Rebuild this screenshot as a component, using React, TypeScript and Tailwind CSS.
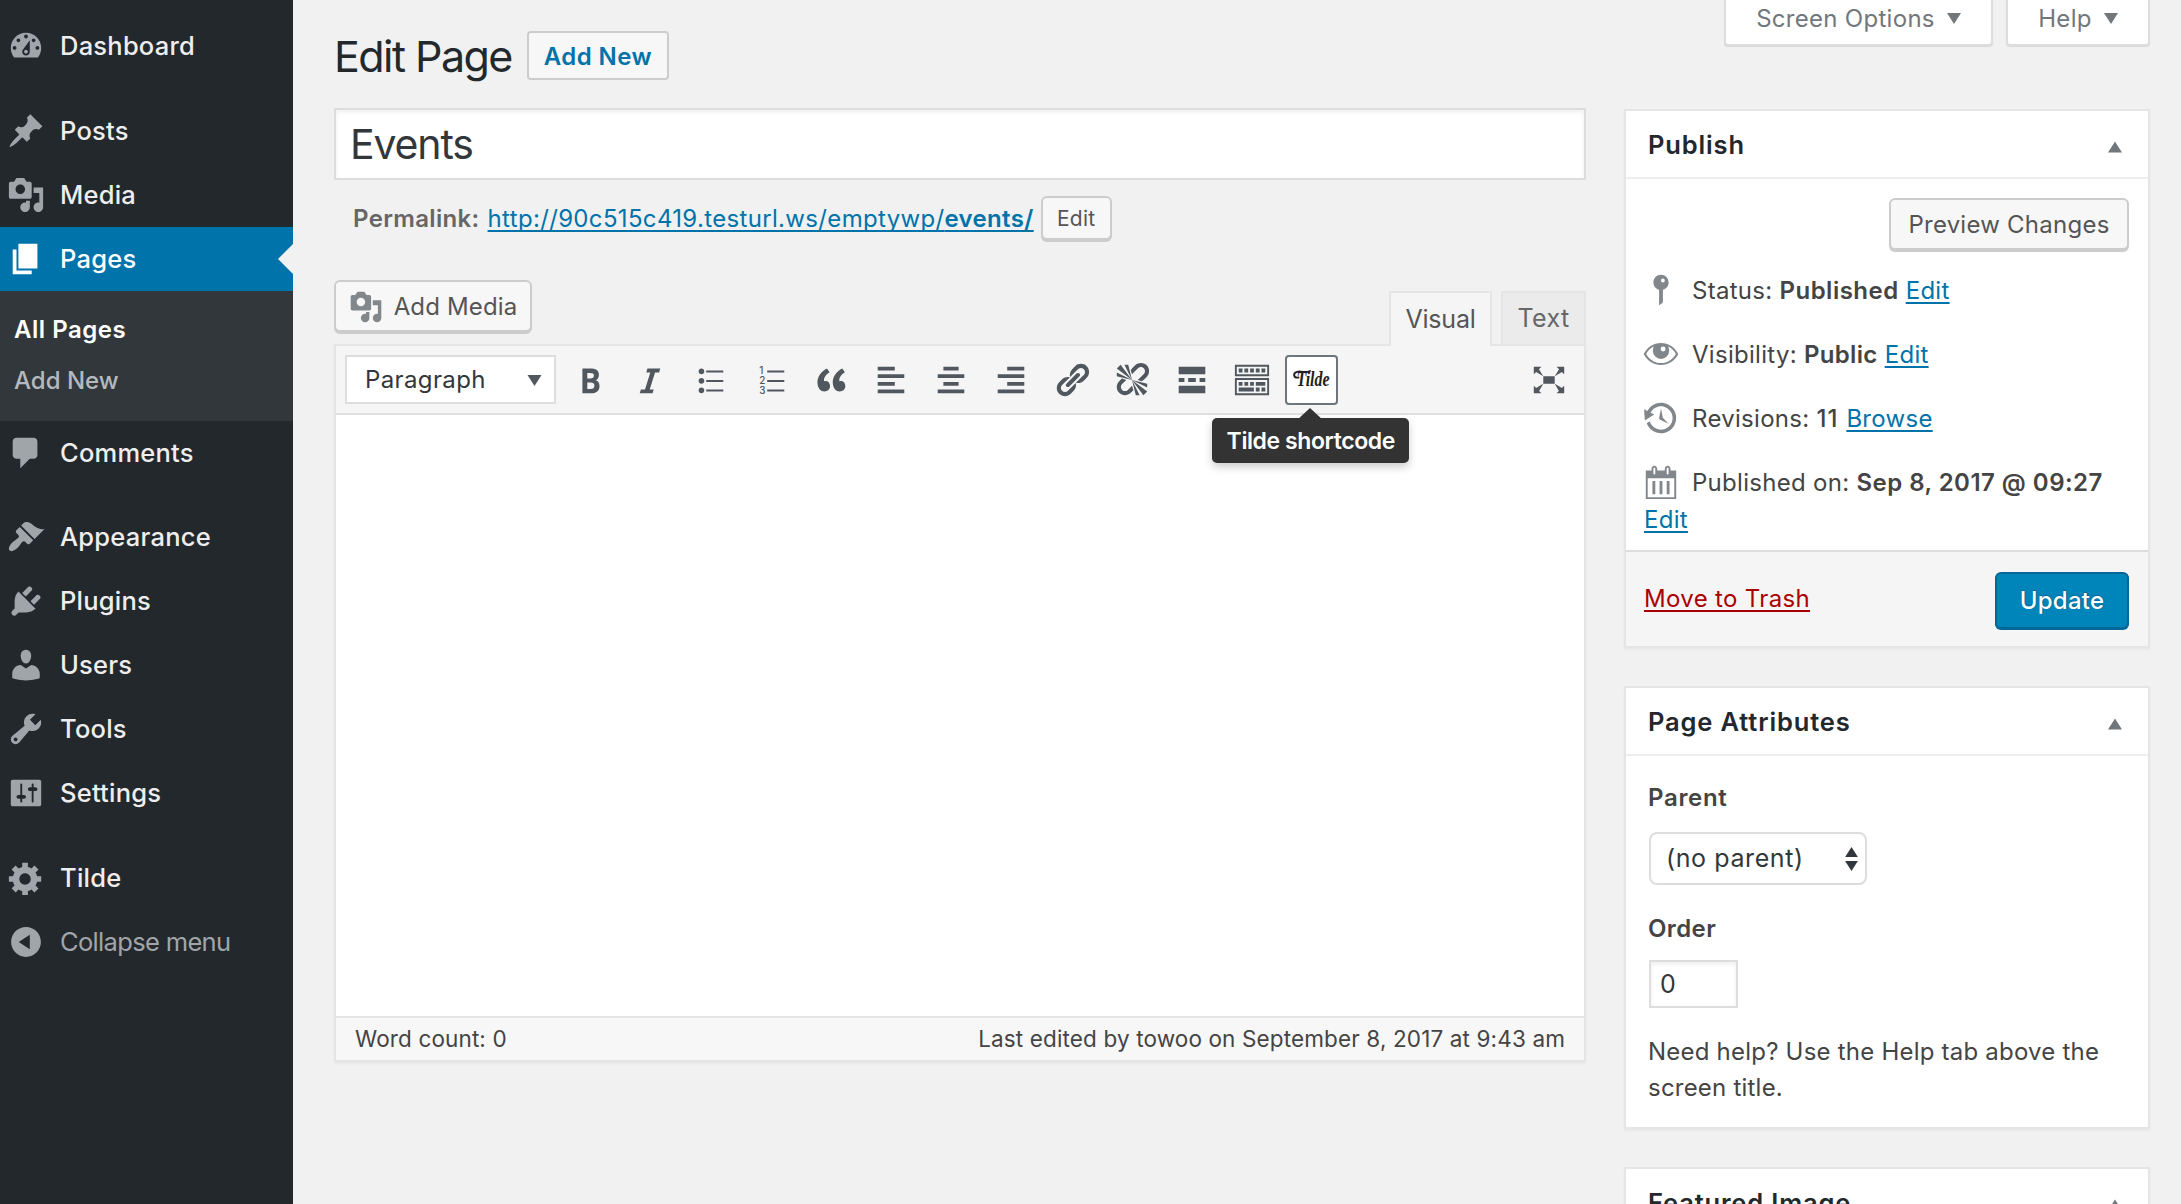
import { clsx } from 'clsx'
import type { ReactNode } from 'react'

const icons = {
  dashboard:
    'M3.76 16h12.48c1.1-1.37 1.76-3.11 1.76-5 0-4.42-3.58-8-8-8s-8 3.58-8 8c0 1.89.66 3.63 1.76 5zM10 4c.55 0 1 .45 1 1s-.45 1-1 1-1-.45-1-1 .45-1 1-1zM6 6c.55 0 1 .45 1 1s-.45 1-1 1-1-.45-1-1 .45-1 1-1zm8 0c.55 0 1 .45 1 1s-.45 1-1 1-1-.45-1-1 .45-1 1-1zm-5.37 5.55L12 7v6c0 1.1-.9 2-2 2s-2-.9-2-2c0-.57.24-1.08.63-1.45zM4 10c.55 0 1 .45 1 1s-.45 1-1 1-1-.45-1-1 .45-1 1-1zm12 0c.55 0 1 .45 1 1s-.45 1-1 1-1-.45-1-1 .45-1 1-1zm-5 3c0-.55-.45-1-1-1s-1 .45-1 1 .45 1 1 1 1-.45 1-1z',
  post: 'M10.44 3.02l1.82-1.82 6.36 6.35-1.83 1.82c-1.05-.68-2.48-.57-3.41.36l-.75.75c-.92.93-1.04 2.35-.35 3.41l-1.83 1.82-2.41-2.41-2.8 2.79c-.42.42-3.38 2.71-3.8 2.29s1.86-3.39 2.28-3.81l2.79-2.79L4.1 9.36l1.83-1.82c1.05.69 2.48.57 3.4-.36l.75-.75c.93-.92 1.05-2.35.36-3.41z',
  media:
    'M13 11V4c0-.55-.45-1-1-1h-1.67L9 1H5L3.67 3H2c-.55 0-1 .45-1 1v7c0 .55.45 1 1 1h10c.55 0 1-.45 1-1zM7 4.5c1.38 0 2.5 1.12 2.5 2.5S8.38 9.5 7 9.5 4.5 8.38 4.5 7 5.62 4.5 7 4.5zM14 6h5v10.5c0 1.38-1.12 2.5-2.5 2.5S14 17.88 14 16.5s1.12-2.5 2.5-2.5c.17 0 .34.02.5.05V9h-3V6zm-4 8.05V13h2v3.5c0 1.38-1.12 2.5-2.5 2.5S7 17.88 7 16.5 8.12 14 9.5 14c.17 0 .34.02.5.05z',
  page: 'M6 15V2h10v13H6zm-1 1h8v2H3V5h2v11z',
  comments:
    'M5 2h9c1.1 0 2 .9 2 2v7c0 1.1-.9 2-2 2h-2l-5 5v-5H5c-1.1 0-2-.9-2-2V4c0-1.1.9-2 2-2z',
  appearance:
    'M14.48 11.06L7.41 3.99l1.5-1.5c.5-.56 2.3-.47 3.51.32 1.21.8 1.43 1.28 2.91 2.1 1.18.64 2.45 1.26 4.45.85zm-.71.71L6.7 4.7 4.93 6.47c-.39.39-.39 1.02 0 1.41l1.06 1.06c.39.39.39 1.03 0 1.42-.6.6-1.43 1.11-2.21 1.69-.35.26-.7.53-1.01.84C1.43 14.23.4 16.08 1.4 17.07c.99 1 2.84-.03 4.18-1.36.31-.31.58-.66.85-1.02.57-.78 1.08-1.61 1.69-2.21.39-.39 1.02-.39 1.41 0l1.06 1.06c.39.39 1.02.39 1.41 0z',
  plugins:
    'M13.11 4.36L9.87 7.6 8 5.73l3.24-3.24c.35-.34 1.05-.2 1.56.32.52.51.66 1.21.31 1.55zm-8 1.77l.91-1.12 9.01 9.01-1.19.84c-.71.71-2.63 1.16-3.82 1.16H6.14L4.9 17.26c-.59.59-1.54.59-2.12 0-.59-.58-.59-1.53 0-2.12l1.24-1.24v-3.88c0-1.13.4-3.19 1.09-3.89zm7.26 3.97l3.24-3.24c.34-.35 1.04-.21 1.55.31.52.51.66 1.21.31 1.55l-3.24 3.25z',
  users:
    'M10 9.25c-2.27 0-2.73-3.44-2.73-3.44C7 4.02 7.82 2 9.97 2c2.16 0 2.98 2.02 2.71 3.81 0 0-.41 3.44-2.68 3.44zm0 2.57L12.72 10c2.39 0 4.52 2.33 4.52 4.53v2.49s-3.65 1.13-7.24 1.13c-3.65 0-7.24-1.13-7.24-1.13v-2.49c0-2.25 1.94-4.48 4.47-4.48z',
  tools:
    'M16.68 9.77c-1.34 1.34-3.3 1.67-4.95.99l-5.41 6.52c-.99.99-2.59.99-3.58 0s-.99-2.59 0-3.57l6.52-5.42c-.68-1.65-.35-3.61.99-4.95 1.28-1.28 3.12-1.62 4.72-1.06l-2.89 2.89 2.82 2.82 2.86-2.87c.53 1.58.18 3.39-1.08 4.65zM3.81 16.21c.4.39 1.04.39 1.43 0 .4-.4.4-1.04 0-1.43-.39-.4-1.03-.4-1.43 0-.39.39-.39 1.03 0 1.43z',
  settings:
    'M18 16V4c0-.55-.45-1-1-1H3c-.55 0-1 .45-1 1v12c0 .55.45 1 1 1h14c.55 0 1-.45 1-1zM8 11h1c.55 0 1 .45 1 1s-.45 1-1 1H8v1.5c0 .28-.22.5-.5.5s-.5-.22-.5-.5V13H6c-.55 0-1-.45-1-1s.45-1 1-1h1V5.5c0-.28.22-.5.5-.5s.5.22.5.5V11zm5-2h-1c-.55 0-1-.45-1-1s.45-1 1-1h1V5.5c0-.28.22-.5.5-.5s.5.22.5.5V7h1c.55 0 1 .45 1 1s-.45 1-1 1h-1v5.5c0 .28-.22.5-.5.5s-.5-.22-.5-.5V9z',
  generic:
    'M18 12h-2.18c-.17.7-.44 1.35-.81 1.93l1.54 1.54-2.1 2.1-1.54-1.54c-.58.36-1.23.63-1.91.79V19H8v-2.18c-.68-.16-1.33-.43-1.91-.79l-1.54 1.54-2.12-2.12 1.54-1.54c-.36-.58-.63-1.23-.79-1.91H1V9.03h2.17c.16-.7.44-1.35.8-1.94L2.43 5.55l2.1-2.1 1.54 1.54c.58-.37 1.24-.64 1.93-.81V2h3v2.18c.68.16 1.33.43 1.91.79l1.54-1.54 2.12 2.12-1.54 1.54c.36.59.64 1.24.8 1.94H18V12zm-8.5 1.5c1.66 0 3-1.34 3-3s-1.34-3-3-3-3 1.34-3 3 1.34 3 3 3z',
  collapse:
    'M10 2.16c4.33 0 7.84 3.51 7.84 7.84s-3.51 7.84-7.84 7.84S2.16 14.33 2.16 10 5.71 2.16 10 2.16zm2 11.72V6.12L6.18 9.97z',
  pin: 'M14 6c0 1.86-1.28 3.41-3 3.86V16c0 1-2 2-2 2V9.86c-1.72-.45-3-2-3-3.86 0-2.21 1.79-4 4-4s4 1.79 4 4zM10 5a1 1 0 1 0 2 0 1 1 0 1 0-2 0z',
  eye: 'M.9 10C2.7 6.5 6 4.2 10 4.2s7.3 2.3 9.1 5.8c-1.8 3.5-5.1 5.8-9.1 5.8S2.7 13.5.9 10zM2.2 10c1.6 2.9 4.4 4.8 7.8 4.8s6.2-1.9 7.8-4.8c-.9-1.7-2.3-3.1-4-3.9.3.7.5 1.4.5 2.2a4.3 4.3 0 1 1-8.6 0c0-.8.2-1.5.5-2.2-1.7.8-3.1 2.2-4 3.9zM9.8 7.4a1.3 1.3 0 1 0 2.6 0 1.3 1.3 0 1 0-2.6 0z',
  backup:
    'M13.65 2.88c3.93 2.01 5.48 6.84 3.47 10.77s-6.83 5.48-10.77 3.47c-1.87-.96-3.2-2.56-3.86-4.4l1.64-1.03c.45 1.57 1.52 2.95 3.08 3.76 3.01 1.54 6.69.35 8.23-2.66 1.55-3.01.36-6.69-2.65-8.24C9.78 3.01 6.1 4.2 4.56 7.21l1.88.97-4.95 3.08-.39-5.82 1.78.91C4.9 2.4 9.75.89 13.65 2.88zm-4.36 7.83C9.11 10.53 9 10.28 9 10c0-.07.03-.12.04-.19h-.01L10 5l.97 4.81L14 13l-4.5-2.12.02-.02c-.08-.04-.16-.09-.23-.15z',
  calendar:
    'M15 4h3v15H2V4h3V3c0-.41.15-.76.44-1.06.29-.29.65-.44 1.06-.44s.77.15 1.06.44c.29.3.44.65.44 1.06v1h4V3c0-.41.15-.76.44-1.06.29-.29.65-.44 1.06-.44s.77.15 1.06.44c.29.3.44.65.44 1.06v1zM6 3v2.5c0 .14.05.26.15.36.09.09.21.14.35.14s.26-.05.35-.14c.1-.1.15-.22.15-.36V3c0-.14-.05-.26-.15-.35-.09-.1-.21-.15-.35-.15s-.26.05-.35.15c-.1.09-.15.21-.15.35zm7 0v2.5c0 .14.05.26.14.36.1.09.22.14.36.14s.26-.05.36-.14c.09-.1.14-.22.14-.36V3c0-.14-.05-.26-.14-.35-.1-.1-.22-.15-.36-.15s-.26.05-.36.15c-.09.09-.14.21-.14.35zm4 15V8H3v10h14zM7 9.5v7H5.5v-7H7zm3.75 0v7h-1.5v-7h1.5zm3.75 0v7H13v-7h1.5z',
  bold: 'M6 4v13h4.54c1.37 0 2.46-.33 3.26-1 .8-.66 1.2-1.58 1.2-2.77 0-.84-.17-1.51-.51-2.01s-.9-.85-1.67-1.03v-.09c.57-.1 1.02-.4 1.36-.9s.51-1.13.51-1.91c0-1.14-.39-1.98-1.17-2.5C12.75 4.26 11.5 4 9.78 4H6zm2.57 5.15V6.26h1.36c.73 0 1.27.11 1.61.32.34.22.51.58.51 1.07 0 .54-.16.92-.47 1.15s-.82.35-1.51.35h-1.5zm0 2.19h1.6c1.44 0 2.16.53 2.16 1.61 0 .6-.17 1.05-.51 1.34s-.86.43-1.57.43H8.57v-3.38z',
  italic: 'M14.78 6h-2.13l-2.8 9h2.12l-.62 2H4.6l.62-2h2.14l2.8-9H8.03l.62-2h6.75z',
  ul: 'M5.5 7C4.67 7 4 6.33 4 5.5 4 4.68 4.67 4 5.5 4 6.32 4 7 4.68 7 5.5 7 6.33 6.32 7 5.5 7zM8 5h9v1H8V5zm-2.5 7c-.83 0-1.5-.67-1.5-1.5C4 9.68 4.67 9 5.5 9c.82 0 1.5.68 1.5 1.5 0 .83-.68 1.5-1.5 1.5zM8 10h9v1H8v-1zm-2.5 7c-.83 0-1.5-.67-1.5-1.5 0-.82.67-1.5 1.5-1.5.82 0 1.5.68 1.5 1.5 0 .83-.68 1.5-1.5 1.5zM8 15h9v1H8v-1z',
  ol: 'M8 5h9v1H8V5zM8 10h9v1H8v-1zM8 15h9v1H8v-1z',
  quote:
    'M9.49 13.22c0-.74-.2-1.38-.61-1.9-.62-.78-1.83-.88-2.53-.72-.29-1.65 1.11-3.75 2.92-4.65L7.88 4c-2.73 1.3-5.42 4.28-4.96 8.05C3.21 14.43 4.59 16 6.54 16c.85 0 1.56-.25 2.12-.75s.83-1.18.83-2.03zm8.05 0c0-.74-.2-1.38-.61-1.9-.63-.78-1.83-.88-2.53-.72-.29-1.65 1.11-3.75 2.92-4.65L15.93 4c-2.73 1.3-5.41 4.28-4.95 8.05.29 2.38 1.66 3.95 3.61 3.95.85 0 1.56-.25 2.12-.75s.83-1.18.83-2.03z',
  alignLeft: 'M12 5V3H3v2h9zm5 4V7H3v2h14zm-5 4v-2H3v2h9zm5 4v-2H3v2h14z',
  alignCenter: 'M14 5V3H6v2h8zm3 4V7H3v2h14zm-3 4v-2H6v2h8zm3 4v-2H3v2h14z',
  alignRight: 'M17 5V3H8v2h9zm0 4V7H3v2h14zm0 4v-2H8v2h9zm0 4v-2H3v2h14z',
  link: 'M17.74 2.76c1.68 1.69 1.68 4.41 0 6.1l-1.53 1.52c-1.12 1.12-2.7 1.47-4.14 1.09l2.62-2.61.76-.77.76-.76c.84-.84.84-2.2 0-3.04-.84-.85-2.2-.85-3.04 0l-.77.76-3.38 3.38c-.37-1.44-.02-3.02 1.1-4.14l1.52-1.53c1.69-1.68 4.42-1.68 6.1 0zM8.59 13.43l5.34-5.34c.42-.42.42-1.1 0-1.52-.44-.43-1.13-.39-1.53 0l-5.33 5.34c-.42.42-.42 1.1 0 1.52.44.43 1.13.39 1.52 0zm-.76 2.29l4.14-4.15c.38 1.44.03 3.02-1.09 4.14l-1.52 1.53c-1.69 1.68-4.41 1.68-6.1 0-1.68-1.68-1.68-4.42 0-6.1l1.53-1.52c1.12-1.12 2.7-1.47 4.14-1.1l-4.14 4.15c-.85.84-.85 2.2 0 3.05.84.84 2.2.84 3.04 0z',
  unlink:
    'M17.74 2.26c1.68 1.69 1.68 4.41 0 6.1l-1.53 1.52c-.32.33-.69.58-1.08.77L13 10l1.69-1.64.76-.77.76-.76c.84-.84.84-2.2 0-3.04-.84-.85-2.2-.85-3.04 0l-.77.76-.76.76L10 7l-.65-2.14c.19-.38.44-.75.77-1.07l1.52-1.53c1.69-1.68 4.42-1.68 6.1 0zM2 4l8 6-6-8zm4-2l4 8-2-8H6zM2 6l8 4-8-2V6zm7.36 7.69L10 13l.74 2.35-1.38 1.39c-1.69 1.68-4.41 1.68-6.1 0-1.68-1.68-1.68-4.42 0-6.1l1.39-1.38L7 10l-.69.64-1.52 1.53c-.85.84-.85 2.2 0 3.04.84.85 2.2.85 3.04 0zM18 16l-8-6 6 8zm-4 2l-4-8 2 8h2zm4-4l-8-4 8 2v2z',
  more: 'M17 7V3H3v4h14zM6 11V9H3v2h3zm6 0V9H8v2h4zm5 0V9h-3v2h3zm0 6v-4H3v4h14z',
  kitchensink:
    'M19 2v6H1V2h18zm-1 5V3H2v4h16zM5 4v2H3V4h2zm3 0v2H6V4h2zm3 0v2H9V4h2zm3 0v2h-2V4h2zm3 0v2h-2V4h2zm2 5v9H1V9h18zm-1 8v-7H2v7h16zM5 11v2H3v-2h2zm3 0v2H6v-2h2zm3 0v2H9v-2h2zm6 0v2h-5v-2h5zm-6 3v2H3v-2h8zm3 0v2h-2v-2h2zm3 0v2h-2v-2h2z',
  expand:
    'M7 8h6v4H7zm-5 5v4h4l-1.2-1.2L7 12l-3.8 2.2M14 17h4v-4l-1.2 1.2L13 12l2.2 3.8M14 3l1.3 1.3L13 8l3.8-2.2L18 7V3M6 3H2v4l1.2-1.2L7 8 4.7 4.3',
}

type IconName = keyof typeof icons

interface IconProps {
  name: IconName
  className?: string
}

function Icon({ name, className = 'size-[38px]' }: IconProps) {
  return (
    <svg viewBox="0 0 20 20" fill="currentColor" className={clsx('shrink-0', className)}>
      <path fillRule={name === 'expand' ? 'nonzero' : 'evenodd'} d={icons[name]} />
      {name === 'ol' && (
        <g fontSize="5.2" fontFamily="Inter, sans-serif" fontWeight="500">
          <text x="3.8" y="7">1</text>
          <text x="3.8" y="12">2</text>
          <text x="3.8" y="17.2">3</text>
        </g>
      )}
    </svg>
  )
}

function Triangle({ up, className }: { up?: boolean; className?: string }) {
  return (
    <svg viewBox="0 0 14 11" fill="currentColor" className={clsx('shrink-0', className)}>
      <path d={up ? 'M7 0l7 11H0z' : 'M0 0h14L7 11z'} />
    </svg>
  )
}

// Script wordmark: italic lettering with a swash over the capital
function TildeLogo() {
  return (
    <svg viewBox="0 0 40 24" className="h-6 w-10 text-[#231f20]">
      <path
        d="M6.500 9.500C1.500 10.500.5 5 5 3.800c5-1.300 7.500 2 13-.8"
        fill="none"
        stroke="currentColor"
        strokeWidth="1.900"
        strokeLinecap="round"
      />
      <text
        x="4.500"
        y="18"
        fill="currentColor"
        fontFamily="Liberation Serif, serif"
        fontSize="20"
        fontStyle="italic"
        fontWeight="700"
        textLength="33"
        lengthAdjust="spacingAndGlyphs"
      >
        Tilde
      </text>
    </svg>
  )
}

interface MenuItemProps {
  icon: IconName
  label: string
  active?: boolean
  muted?: boolean
}

function MenuItem({ icon, label, active, muted }: MenuItemProps) {
  return (
    <a
      className={clsx(
        'relative flex h-16 items-center gap-[15px] pl-[7px] text-[25.5px]',
        active && 'bg-[#0073aa] text-white',
        !active && !muted && 'text-[#eee]',
        muted ? 'tracking-[-0.026em] text-[#a0a5aa]' : 'font-medium tracking-[0.009em]',
      )}
    >
      <Icon name={icon} className={clsx('size-[38px]', !active && 'text-[#a0a5aa]')} />
      {label}
      {active && (
        <span className="absolute top-[17px] right-0 border-y-[15px] border-r-[15px] border-y-transparent border-r-[#f1f1f1]" />
      )}
    </a>
  )
}

function Sidebar() {
  return (
    <nav className="w-[293px] shrink-0 bg-[#23282d] pt-[14px]">
      <MenuItem icon="dashboard" label="Dashboard" />
      <div className="h-[21px]" />
      <MenuItem icon="post" label="Posts" />
      <MenuItem icon="media" label="Media" />
      <MenuItem icon="page" label="Pages" active />
      <div className="flex h-[130px] flex-col bg-[#32373c] pt-[13px] pl-[14px] text-2xl leading-[51px]">
        <a className="font-semibold tracking-[0.022em] text-white">All Pages</a>
        <a className="font-medium text-[#b4b9be]">Add New</a>
      </div>
      <MenuItem icon="comments" label="Comments" />
      <div className="h-5" />
      <MenuItem icon="appearance" label="Appearance" />
      <MenuItem icon="plugins" label="Plugins" />
      <MenuItem icon="users" label="Users" />
      <MenuItem icon="tools" label="Tools" />
      <MenuItem icon="settings" label="Settings" />
      <div className="h-[21px]" />
      <MenuItem icon="generic" label="Tilde" />
      <MenuItem icon="collapse" label="Collapse menu" muted />
    </nav>
  )
}

function Button({ className, children }: { className?: string; children: ReactNode }) {
  return (
    <button
      className={clsx(
        'flex items-center justify-center rounded-[6px] border-2 border-[#ccc] bg-[#f7f7f7] pt-[2px] text-[#555] shadow-[0_2px_0_#ccc]',
        className,
      )}
    >
      {children}
    </button>
  )
}

function Link({ children }: { children: ReactNode }) {
  return (
    <a className="text-[#0073aa] underline decoration-2 underline-offset-[3px] [text-decoration-skip-ink:none]">
      {children}
    </a>
  )
}

const tools: IconName[] = [
  'bold',
  'italic',
  'ul',
  'ol',
  'quote',
  'alignLeft',
  'alignCenter',
  'alignRight',
  'link',
  'unlink',
  'more',
  'kitchensink',
]

function Toolbar() {
  return (
    <div className="flex h-[69px] shrink-0 items-center border-b-2 border-[#dedede] bg-[#f5f5f5] pl-[9px] text-[#50575e]">
      <div className="mr-1 flex h-[49px] w-[211px] items-center justify-between border-2 border-[#ddd] bg-white pt-px pr-3 pl-[18px] text-2xl tracking-[0.016em] text-[#32373c]">
        Paragraph
        <Triangle className="h-[11px] w-[15px] text-[#50575e]" />
      </div>
      {tools.map((name) => (
        <span key={name} className="flex w-[60.2px] justify-center">
          <Icon name={name} />
        </span>
      ))}
      <span className="relative ml-[3px] flex h-[50px] w-[53px] items-center justify-center rounded-[4px] border-2 border-[#6f757c] bg-white">
        <TildeLogo />
        <span className="absolute top-[51px] left-[9px] border-x-[14px] border-b-[13px] border-x-transparent border-b-[#333]" />
        <span className="absolute top-[61px] -left-[75px] flex h-[45px] w-[197px] items-center justify-center rounded-[5px] bg-[#333] pt-[2px] text-[23px] font-semibold tracking-[-0.018em] whitespace-nowrap text-white shadow-[0_4px_8px_rgba(0,0,0,0.2)]">
          Tilde shortcode
        </span>
      </span>
      <Icon name="expand" className="mr-[16px] ml-auto size-[38px]" />
    </div>
  )
}

function Editor() {
  return (
    <div className="flex h-[718px] flex-col border-2 border-[#e5e5e5] bg-white shadow-[0_2px_2px_rgba(0,0,0,0.04)]">
      <Toolbar />
      <div className="flex-1" />
      <div className="flex h-[44px] items-center justify-between border-t-2 border-[#e5e5e5] bg-[#f7f7f7] px-[19px] text-[22.5px] tracking-[0.006em]">
        <span>Word count: 0</span>
        <span>Last edited by towoo on September 8, 2017 at 9:43 am</span>
      </div>
    </div>
  )
}

interface PanelProps {
  title: string
  className?: string
  children?: ReactNode
}

function Panel({ title, className, children }: PanelProps) {
  return (
    <section
      className={clsx(
        'flex flex-col border-2 border-[#e5e5e5] bg-white shadow-[0_2px_2px_rgba(0,0,0,0.04)]',
        className,
      )}
    >
      <header className="flex h-[68px] shrink-0 items-center justify-between border-b-2 border-[#eee] pt-[2px] pr-[26px] pl-[22px]">
        <h2 className="text-[25.5px] leading-[36px] font-semibold tracking-[0.033em] text-[#23282d]">
          {title}
        </h2>
        <Triangle up className="mt-[3px] h-[12px] w-[14px] text-[#72777c]" />
      </header>
      {children}
    </section>
  )
}

function StatusRow({ icon, children }: { icon: IconName; children: ReactNode }) {
  return (
    <div className="flex h-16 items-center gap-3">
      <Icon name={icon} className="-ml-[2px] size-[38px] text-[#82878c]" />
      <span className="pt-px whitespace-pre">{children}</span>
    </div>
  )
}

function PublishPanel() {
  return (
    <Panel title="Publish" className="mt-[62px] h-[539px]">
      <div className="flex justify-end pt-[19px] pr-[19px]">
        <Button className="h-[52px] w-[240px] text-2xl tracking-[0.01em]">Preview Changes</Button>
      </div>
      <div className="flex-1 pt-[8px] pl-[18px] tracking-[0.012em]">
        <StatusRow icon="pin">
          Status: <b className="font-semibold tracking-[0.02em]">Published</b> <Link>Edit</Link>
        </StatusRow>
        <StatusRow icon="eye">
          Visibility: <b className="font-semibold tracking-[0.014em]">Public</b> <Link>Edit</Link>
        </StatusRow>
        <StatusRow icon="backup">
          Revisions:{' '}
          <span className="mr-px font-medium tracking-[0.04em]">11</span> <Link>Browse</Link>
        </StatusRow>
        <StatusRow icon="calendar">
          Published on: <b className="font-semibold tracking-[0.02em]">Sep 8, 2017 @ 09:27</b>
        </StatusRow>
        <div className="-mt-3 leading-[36px]">
          <Link>Edit</Link>
        </div>
      </div>
      <div className="flex h-[96px] items-center justify-between border-t-2 border-[#ddd] bg-[#f5f5f5] pr-[19px] pl-[18px]">
        <a className="tracking-[0.014em] text-[#a00] underline decoration-2 underline-offset-[3px]">
          Move to Trash
        </a>
        <button className="mt-[2px] flex h-[57px] w-[134px] items-center justify-center rounded-[6px] border-2 border-[#006799] bg-[#0085ba] pt-px text-2xl font-medium tracking-[0.01em] text-white shadow-[0_1px_0_#006799] [text-shadow:0_-1px_1px_#006799,1px_0_1px_#006799]">
          Update
        </button>
      </div>
    </Panel>
  )
}

function AttributesPanel() {
  return (
    <Panel title="Page Attributes" className="mt-[38px] h-[443px]">
      <div className="flex flex-col items-start pt-[24px] pl-[22px]">
        <b className="leading-[36px] font-semibold tracking-[0.028em]">Parent</b>
        <div className="mt-[16px] ml-px flex h-[53px] w-[218px] items-center justify-between rounded-[8px] border-2 border-[#ddd] bg-white pr-[7px] pl-[15px] text-[25px] tracking-[0.024em] text-[#32373c]">
          (no parent)
          <span className="flex flex-col gap-1">
            <Triangle up className="h-[10px] w-[13px]" />
            <Triangle className="h-[10px] w-[13px]" />
          </span>
        </div>
        <b className="mt-[26px] leading-[36px] font-semibold tracking-[0.016em]">Order</b>
        <div className="mt-[13px] ml-px flex h-[48px] w-[89px] items-center border-2 border-[#ddd] bg-white pt-px pl-[9px] text-[25px] text-[#32373c] shadow-[inset_0_2px_4px_rgba(0,0,0,0.07)]">
          0
        </div>
        <p className="mt-[26px] w-[470px] leading-[36px] tracking-[0.009em]">
          Need help? Use the Help tab above the screen title.
        </p>
      </div>
    </Panel>
  )
}

function MetaTab({ label, className }: { label: string; className: string }) {
  return (
    <div
      className={clsx(
        'flex h-[46px] items-start justify-center gap-[12px] rounded-b-[4px] border-2 border-t-0 border-[#ddd] bg-white pt-[3px] leading-[32px] tracking-[0.012em] text-[#72777c] shadow-[0_1px_1px_rgba(0,0,0,0.1)]',
        className,
      )}
    >
      {label}
      <Triangle className="mt-[10px] h-[11px] w-[14px]" />
    </div>
  )
}

export default function App() {
  return (
    <div className="flex h-[1204px] w-[2181px] overflow-hidden bg-[#f1f1f1] font-['Inter',sans-serif] text-2xl text-[#444]">
      <Sidebar />
      <main className="ml-[41px] w-[1252px] shrink-0">
        <div className="flex items-center gap-[15px] pt-[31px]">
          <h1 className="pt-px text-[43px] leading-[48px] tracking-[-0.036em] text-[#23282d]">
            Edit Page
          </h1>
          <a className="flex h-[49px] w-[142px] items-center justify-center rounded-[4px] border-2 border-[#ccc] bg-[#f7f7f7] pt-[2px] font-semibold tracking-[0.018em] text-[#0073aa]">
            Add New
          </a>
        </div>
        <div className="mt-[28px] flex h-[72px] items-center border-2 border-[#ddd] bg-white pt-px pl-[14px] text-[41px] tracking-[-0.028em] text-[#32373c] shadow-[inset_0_2px_4px_rgba(0,0,0,0.07)]">
          Events
        </div>
        <div className="mt-[15px] flex h-[46px] items-center pl-[19px]">
          <b className="mr-[8px] pt-px font-semibold tracking-[0.014em] text-[#666]">Permalink:</b>
          <span className="pt-px tracking-[0.014em]">
            <Link>
              http://90c515c419.testurl.ws/emptywp/<b className="font-semibold">events/</b>
            </Link>
          </span>
          <Button className="ml-[7px] h-[44px] w-[71px] text-[21px] tracking-[0.014em]">Edit</Button>
        </div>
        <div className="mt-[39px] flex h-16 items-start justify-between">
          <Button className="h-[52px] w-[198px] gap-[11px] text-2xl tracking-[0.006em]">
            <Icon name="media" className="size-[34px] text-[#82878c]" />
            Add Media
          </Button>
          <div className="mt-[11px] flex gap-[9px] text-[25px] text-[#555]">
            <span className="relative flex h-[55px] w-[103px] items-center justify-center border-2 border-b-0 border-[#e5e5e5] bg-[#f5f5f5] tracking-[-0.008em]">
              Visual
            </span>
            <span className="flex h-[53px] w-[85px] items-center justify-center border-2 border-b-0 border-[#e5e5e5] bg-[#ebebeb] pt-px tracking-[0.014em] text-[#666]">
              Text
            </span>
          </div>
        </div>
        <Editor />
      </main>
      <aside className="ml-[38px] w-[526px] shrink-0">
        <div className="flex h-[47px] justify-end gap-[13px]">
          <MetaTab label="Screen Options" className="w-[269px]" />
          <MetaTab label="Help" className="w-[144px]" />
        </div>
        <PublishPanel />
        <AttributesPanel />
        <Panel title="Featured Image" className="mt-[38px] h-[200px]" />
      </aside>
    </div>
  )
}
